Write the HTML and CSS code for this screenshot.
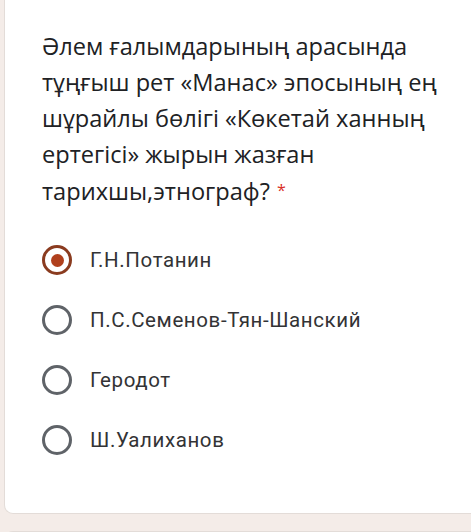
FILE: index.html
```html
<!DOCTYPE html>
<html lang="kk">
<head>
<meta charset="utf-8">
<link rel="stylesheet" href="styles.css">
</head>
<body>
<div class="page">
  <div class="card">
    <div class="question">Әлем ғалымдарының арасында тұңғыш рет «Манас» эпосының ең шұрайлы бөлігі «Көкетай ханның ертегісі» жырын жазған тарихшы,этнограф?<span class="req">*</span></div>
    <div class="options">
      <div class="option"><span class="radio checked"><span class="dot"></span></span><span class="label">Г.Н.Потанин</span></div>
      <div class="option"><span class="radio"></span><span class="label">П.С.Семенов-Тян-Шанский</span></div>
      <div class="option"><span class="radio"></span><span class="label">Геродот</span></div>
      <div class="option"><span class="radio"></span><span class="label">Ш.Уалиханов</span></div>
    </div>
  </div>
  <div class="card next"></div>
</div>
</body>
</html>
```
FILE: styles.css
```css
html, body {
  margin: 0;
  padding: 0;
  background: #f4ece8;
  height: 100%;
  overflow: hidden;
}
.page {
  padding-left: 4px;
  display: flex;
  flex-direction: column;
  gap: 17px;
}
.card {
  background: #ffffff;
  border: 1px solid #e3dcd8;
  border-top: none;
  border-right: none;
  border-radius: 0 0 0 9px;
  padding: 28px 0 53px 37px;
}
.card.next {
  border-top: 1px solid #e3dcd8;
  border-radius: 9px 0 0 0;
  height: 40px;
  padding: 0;
}
.question {
  font-family: "Open Sans", "Noto Sans", sans-serif;
  font-size: 23.6px;
  line-height: 36px;
  color: #202124;
  width: 420px;
}
.req {
  color: #d93025;
  font-size: 16px;
  margin-left: 7px;
  vertical-align: 4px;
}
.options {
  margin-top: 31px;
  display: flex;
  flex-direction: column;
  gap: 20px;
}
.option {
  display: flex;
  align-items: center;
  gap: 18px;
  height: 40px;
}
.radio {
  box-sizing: border-box;
  width: 30px;
  height: 30px;
  border: 3.5px solid #5f6368;
  border-radius: 50%;
  display: flex;
  align-items: center;
  justify-content: center;
  flex: none;
}
.radio.checked {
  border-color: #8a3b1f;
}
.dot {
  width: 13px;
  height: 13px;
  border-radius: 50%;
  background: #b0401d;
}
.label {
  font-family: Roboto, "Noto Sans", sans-serif;
  font-size: 20.5px;
  font-weight: 400;
  color: #333335;
  letter-spacing: 0.6px;
}
```
